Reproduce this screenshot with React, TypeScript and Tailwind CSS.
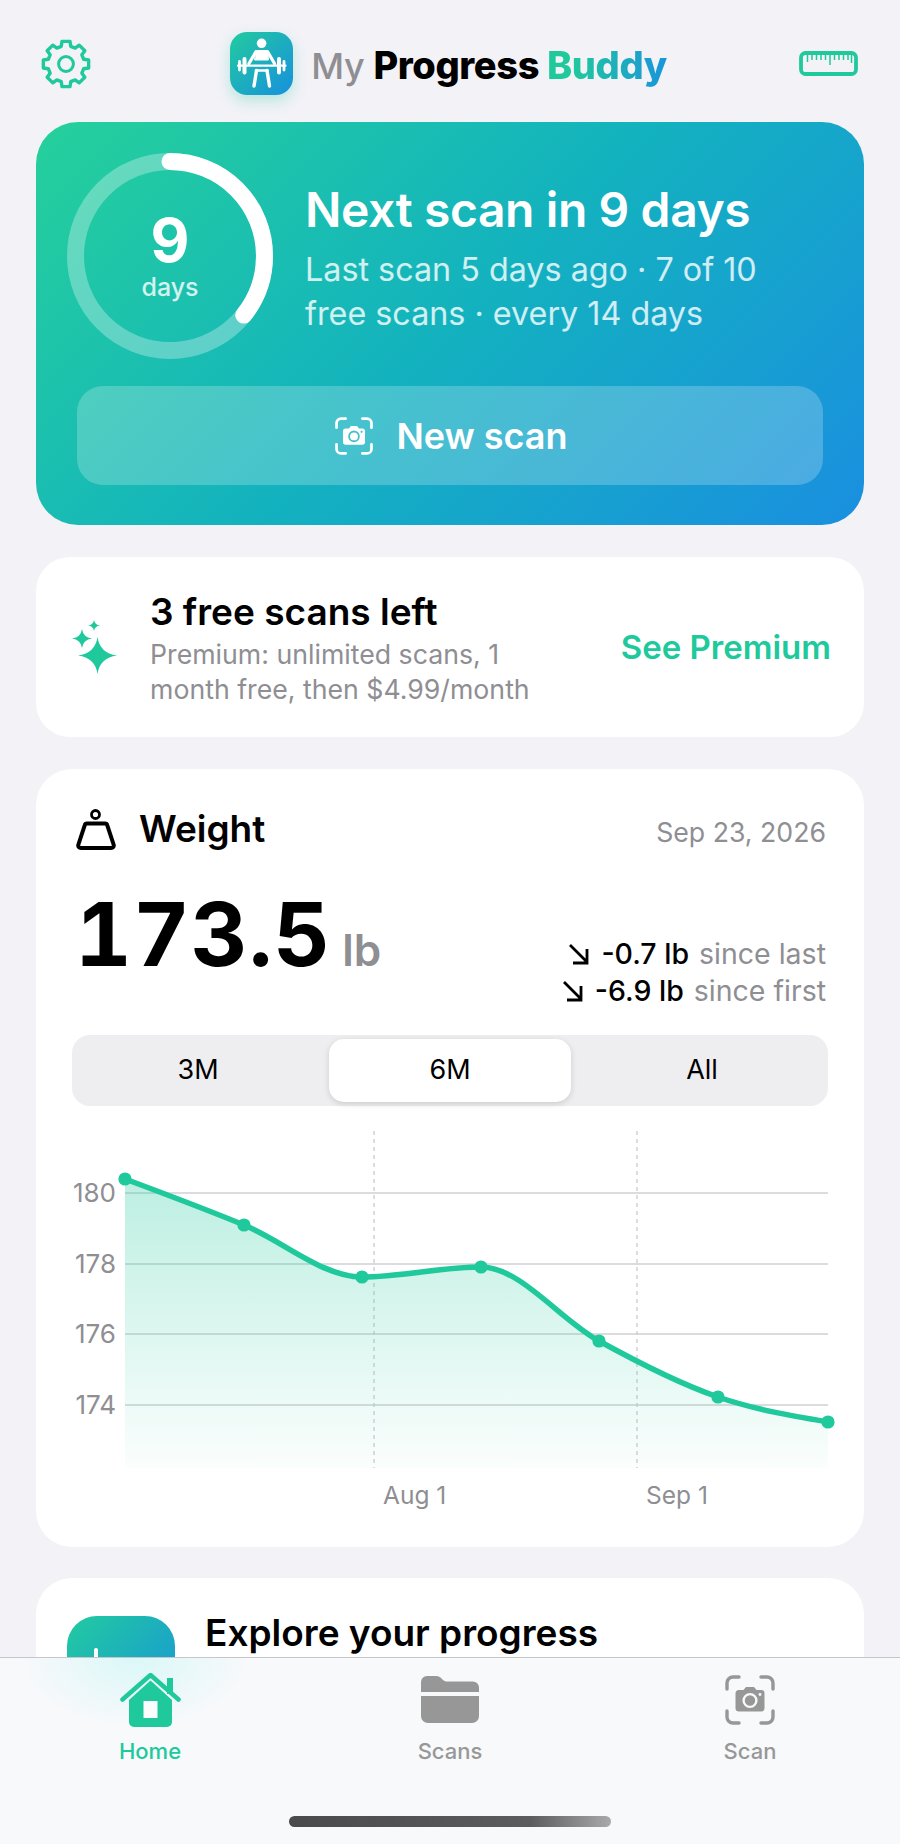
const GREEN = "#20c99c";

function Gear() {
  const cx = 26;
  const cy = 25;
  const pt = (R: number, deg: number) => {
    const a = (deg * Math.PI) / 180;
    return `${(cx + R * Math.cos(a)).toFixed(2)} ${(cy + R * Math.sin(a)).toFixed(2)}`;
  };
  let d = "";
  for (let i = 0; i < 8; i++) {
    const a = i * 45 - 90;
    d += `${i === 0 ? "M" : "L"}${pt(18.3, a - 15)}L${pt(23, a - 10)}L${pt(23, a + 10)}L${pt(18.3, a + 15)}`;
  }
  d += "Z";
  return (
    <svg viewBox="0 0 52 50" width="52" height="50" fill="none" stroke={GREEN} strokeWidth="3.4" strokeLinejoin="round" className="ml-[4px]">
      <path d={d} />
      <circle cx={cx} cy={cy} r="7.4" strokeWidth="3" />
    </svg>
  );
}

function Logo() {
  return (
    <div className="w-[63px] h-[63px] rounded-[17px] bg-[linear-gradient(135deg,#22cb9f,#1790dd)] shadow-[0_6px_14px_rgba(32,201,156,0.28)] shrink-0">
      <svg viewBox="0 0 63 63" width="63" height="63" fill="none" stroke="#fff" strokeLinecap="round" strokeLinejoin="round">
        <circle cx="31.6" cy="11.3" r="4.8" fill="#fff" stroke="none" />
        <path d="M8 33.7H55.5" strokeWidth="2.2" />
        <path d="M9.5 29.5V38M54 29.5V38" strokeWidth="2.8" />
        <path d="M14.5 27V40.5M49 27V40.5" strokeWidth="4" />
        <path d="M19 31.5 26 19.5H37.5L44.5 31.5" strokeWidth="3.2" />
        <path d="M26 19H37.5L38.5 28H25Z" fill="#fff" strokeWidth="1" />
        <path d="M26 38.5H37.5" strokeWidth="2.6" />
        <path d="M26.5 38.5 24 54M37 38.5 39.5 54" strokeWidth="3.4" />
      </svg>
    </div>
  );
}

function RulerIcon() {
  return (
    <svg viewBox="0 0 59 25" width="59" height="25" fill="none" stroke={GREEN} strokeLinecap="butt">
      <rect x="2" y="2" width="55" height="21" rx="4.5" strokeWidth="3.8" />
      <path d="M8.5 3V11M13 3V9M17.5 3V9M22 3V9M26.5 3V9M31 3V14M35.5 3V9M40 3V9M44.5 3V9M49 3V9M52.5 3V12" strokeWidth="1.5" />
    </svg>
  );
}

function ViewfinderCamera({ size, color, sw, lens }: { size: number; color: string; sw: number; lens: string }) {
  return (
    <svg viewBox="0 0 50 50" width={size} height={size} fill="none">
      <path
        d="M2 14V8A6 6 0 0 1 8 2H14M36 2H42A6 6 0 0 1 48 8V14M48 36V42A6 6 0 0 1 42 48H36M14 48H8A6 6 0 0 1 2 42V36"
        stroke={color}
        strokeWidth={sw}
        strokeLinecap="round"
      />
      <path
        d="M14 15H18.5L21 12H29L31.5 15H36A3.5 3.5 0 0 1 39.5 18.5V33A3.5 3.5 0 0 1 36 36.5H14A3.5 3.5 0 0 1 10.5 33V18.5A3.5 3.5 0 0 1 14 15Z"
        fill={color}
      />
      <circle cx="25" cy="25.5" r="6.4" fill="none" stroke={lens} strokeWidth="2.4" />
      <circle cx="35" cy="19.5" r="1.4" fill={lens} />
    </svg>
  );
}

function star(x: number, y: number, w: number, h: number) {
  const k = 0.12;
  const kx = w * k;
  const ky = h * k;
  return `M${x} ${y - h}Q${x + kx} ${y - ky} ${x + w} ${y}Q${x + kx} ${y + ky} ${x} ${y + h}Q${x - kx} ${y + ky} ${x - w} ${y}Q${x - kx} ${y - ky} ${x} ${y - h}Z`;
}

function Sparkles() {
  return (
    <svg viewBox="0 0 45 54" width="45" height="54" fill={GREEN}>
      <path d={star(25.5, 35.5, 19.5, 18.5)} />
      <path d={star(10, 18.5, 10, 9.5)} />
      <path d={star(22, 5.5, 6, 5.5)} />
    </svg>
  );
}

function WeightIcon() {
  return (
    <svg viewBox="0 0 41 41" width="41" height="41" fill="none" stroke="#000" strokeLinecap="round" strokeLinejoin="round" strokeWidth="4">
      <circle cx="19.5" cy="5.5" r="4" strokeWidth="2.8" />
      <path d="M11 14.5H29C30.3 14.5 31 15.2 31.3 16.3L37.6 35.5C38.2 37.5 37 39 35 39H5C3 39 1.8 37.5 2.4 35.5L8.7 16.3C9 15.2 9.7 14.5 11 14.5Z" />
    </svg>
  );
}

function DownRight() {
  return (
    <svg viewBox="0 0 24 24" width="24" height="24" fill="none" stroke="#000" strokeWidth="2.8">
      <path d="M3 3 20 20M20 7V21H6" />
    </svg>
  );
}

function HomeIcon() {
  return (
    <svg viewBox="0 0 61 54" width="61" height="54" fill={GREEN}>
      <path d="M30.5 7.5 52 27V49A5 5 0 0 1 47 54H14A5 5 0 0 1 9 49V27Z" />
      <rect x="23.5" y="28" width="14" height="17" rx="0.5" fill="#fbfdfd" />
      <path d="M2.5 26.5 30.5 2 58.5 26.5" fill="none" stroke={GREEN} strokeWidth="4.5" strokeLinecap="round" strokeLinejoin="round" />
      <rect x="47" y="5" width="6" height="16" />
    </svg>
  );
}

function FolderIcon() {
  return (
    <svg viewBox="0 0 58 47" width="58" height="47" fill="#979797">
      <path d="M0 16V6A6 6 0 0 1 6 0H15C18 0 19.5 1.5 21.5 3.5C23 5 24.5 5.5 26 5.5H52A6 6 0 0 1 58 11.5V16Z" />
      <path d="M0 20H58V40A7 7 0 0 1 51 47H7A7 7 0 0 1 0 40Z" />
    </svg>
  );
}

function Chart() {
  const pts: [number, number][] = [
    [89, 59], [208, 105], [326, 157], [445, 147], [563, 221], [682, 277], [792, 302],
  ];
  const slopes = pts.slice(1).map((p, i) => (p[1] - pts[i][1]) / (p[0] - pts[i][0]));
  const widths = pts.slice(1).map((p, i) => p[0] - pts[i][0]);
  const t = pts.map(() => 0);
  for (let i = 1; i < pts.length - 1; i++) {
    const s0 = slopes[i - 1];
    const s1 = slopes[i];
    const p = (s0 * widths[i] + s1 * widths[i - 1]) / (widths[i - 1] + widths[i]);
    t[i] = (Math.sign(s0) + Math.sign(s1)) * Math.min(Math.abs(s0), Math.abs(s1), 0.5 * Math.abs(p));
  }
  t[0] = (3 * slopes[0] - t[1]) / 2;
  t[pts.length - 1] = (3 * slopes[slopes.length - 1] - t[pts.length - 2]) / 2;
  let d = `M${pts[0][0]} ${pts[0][1]}`;
  for (let i = 0; i < pts.length - 1; i++) {
    const dx = widths[i] / 3;
    d += `C${pts[i][0] + dx} ${pts[i][1] + t[i] * dx} ${pts[i + 1][0] - dx} ${pts[i + 1][1] - t[i + 1] * dx} ${pts[i + 1][0]} ${pts[i + 1][1]}`;
  }
  const area = `${d}L792 348L89 348Z`;
  const grid: [number, string][] = [[73, "180"], [144, "178"], [214, "176"], [285, "174"]];
  return (
    <svg viewBox="0 0 828 400" width="828" height="400" className="block mt-[14px]" style={{ fontFamily: "Inter, sans-serif" }}>
      <defs>
        <linearGradient id="areaFill" x1="0" y1="0" x2="0" y2="1">
          <stop offset="0" stopColor={GREEN} stopOpacity="0.3" />
          <stop offset="1" stopColor={GREEN} stopOpacity="0.02" />
        </linearGradient>
      </defs>
      {grid.map(([y, label]) => (
        <g key={label}>
          <line x1="89" x2="792" y1={y} y2={y} stroke="#d1d1d6" strokeWidth="1.3" />
          <text x="80" y={y + 9} textAnchor="end" fontSize="26" fill="#8e8e93">{label}</text>
        </g>
      ))}
      {[338, 601].map((x) => (
        <line key={x} x1={x} x2={x} y1="11" y2="348" stroke="#c7c7cc" strokeWidth="1.2" strokeDasharray="4 4" />
      ))}
      <path d={area} fill="url(#areaFill)" />
      <path d={d} fill="none" stroke={GREEN} strokeWidth="5.5" strokeLinecap="round" />
      {pts.map(([x, y]) => (
        <circle key={x} cx={x} cy={y} r="6.6" fill={GREEN} />
      ))}
      <text x="347" y="384" fontSize="24.5" fill="#8e8e93">Aug 1</text>
      <text x="610" y="384" fontSize="24.5" fill="#8e8e93">Sep 1</text>
    </svg>
  );
}

export default function App() {
  const r = 94.5;
  const c = 2 * Math.PI * r;
  return (
    <div className="relative h-[1844px] w-[900px] overflow-hidden bg-[#f2f2f7] font-['Inter',sans-serif] text-black">
      <div className="flex flex-col px-9">
        {/* Header */}
        <header className="grid grid-cols-[1fr_auto_1fr] items-center pt-8 pb-[27px]">
          <Gear />
          <div className="flex items-center gap-[18px]">
            <Logo />
            <div className="text-[38px] leading-none tracking-[-0.4px] whitespace-nowrap mt-[2px] mr-[3px]">
              <span className="text-[36px] font-medium text-[#8e8e93]">My </span>
              <span className="font-extrabold">Progress </span>
              <span className="font-extrabold bg-[linear-gradient(90deg,#20c99c_20%,#1a94dc)] bg-clip-text text-transparent">Buddy</span>
            </div>
          </div>
          <div className="flex justify-end pr-[6px]">
            <RulerIcon />
          </div>
        </header>

        {/* Hero */}
        <section className="h-[403px] rounded-[42px] bg-[linear-gradient(135deg,#26d09b,#13b2bf_50%,#1a8fe0)] pt-[31px] px-[31px] text-white">
          <div className="flex items-center gap-[32px]">
            <div className="relative w-[206px] h-[206px] shrink-0">
              <svg viewBox="0 0 206 206" width="206" height="206" fill="none" className="-rotate-90">
                <circle cx="103" cy="103" r={r} stroke="rgba(255,255,255,0.3)" strokeWidth="17" />
                <circle cx="103" cy="103" r={r} stroke="#fff" strokeWidth="17" strokeLinecap="round" strokeDasharray={`${c * 0.357} ${c}`} />
              </svg>
              <div className="absolute inset-0 flex flex-col items-center justify-center">
                <div className="text-[60px] leading-[60px] font-bold">9</div>
                <div className="mt-[2px] text-[25px] leading-[30px] font-medium text-white/80">days</div>
              </div>
            </div>
            <div className="flex flex-col mt-[5px]">
              <h1 className="text-[48px] leading-[56px] font-semibold tracking-[-0.4px] whitespace-nowrap">Next scan in 9 days</h1>
              <p className="mt-[10px] text-[32.3px] leading-[44px] text-white/80 whitespace-nowrap">
                Last scan 5 days ago · 7 of 10
                <br />
                free scans · every 14 days
              </p>
            </div>
          </div>
          <button className="mt-[27px] mx-[10px] w-[746px] h-[99px] rounded-[26px] bg-white/22 flex items-center justify-center gap-[23px] pl-[3px]">
            <ViewfinderCamera size={38} color="#fff" sw={3.6} lens="#45bfc9" />
            <span className="text-[36px] font-semibold">New scan</span>
          </button>
        </section>

        {/* Premium */}
        <section className="mt-[32px] h-[180px] rounded-[34px] bg-white flex items-center pl-[36px] pr-[33px]">
          <Sparkles />
          <div className="ml-[33px] flex-1 flex flex-col mt-[3px]">
            <div className="text-[37px] leading-[42px] font-semibold whitespace-nowrap">3 free scans left</div>
            <div className="mt-[4px] text-[26.7px] leading-[35px] text-[#8e8e93] whitespace-nowrap">
              Premium: unlimited scans, 1
              <br />
              month free, then $4.99/month
            </div>
          </div>
          <div className="text-[33px] font-semibold text-[#20c99c] mt-[2px] whitespace-nowrap">See Premium</div>
        </section>

        {/* Weight */}
        <section className="mt-[32px] h-[778px] rounded-[36px] bg-white px-9 pt-[39px]">
          <div className="flex items-center justify-between">
            <div className="flex items-center gap-[22px] ml-[4px]">
              <WeightIcon />
              <div className="text-[37px] font-semibold leading-[42px]">Weight</div>
            </div>
            <div className="text-[26.7px] leading-[30px] text-[#8e8e93] mr-[2px] mt-[6px]">Sep 23, 2026</div>
          </div>
          <div className="mt-[40px] flex items-start justify-between">
            <div className="flex items-baseline gap-[11px] ml-[3px]">
              <span className="text-[88px] leading-[88px] font-bold tabular-nums tracking-[1px]">173.5</span>
              <span className="text-[44px] font-semibold text-[#8e8e93]">lb</span>
            </div>
            <div className="pt-[45px] flex flex-col items-end text-[28.5px] leading-[37px] mr-[2px]">
              <div className="flex items-center gap-[10px]">
                <DownRight />
                <span className="font-medium">-0.7 lb</span>
                <span className="text-[#8e8e93]">since last</span>
              </div>
              <div className="flex items-center gap-[10px]">
                <DownRight />
                <span className="font-medium">-6.9 lb</span>
                <span className="text-[#8e8e93]">since first</span>
              </div>
            </div>
          </div>
          <div className="mt-[26px] h-[71px] rounded-[18px] bg-[#eeeef0] grid grid-cols-3 items-center text-[27px] text-center">
            <div>3M</div>
            <div className="mx-[5px] h-[63px] rounded-[15px] bg-white shadow-[0_2px_6px_rgba(0,0,0,0.14)] flex items-center justify-center">6M</div>
            <div>All</div>
          </div>
          <div className="-mx-9">
            <Chart />
          </div>
        </section>

        {/* Explore */}
        <section className="mt-[31px] h-[300px] rounded-[36px] bg-white pl-[31px] pt-[38px] flex gap-[30px]">
          <div className="w-[108px] h-[108px] rounded-[30px] bg-[linear-gradient(135deg,#22cb9f,#1790dd)] relative shrink-0">
            <div className="absolute left-[27px] top-[32px] w-[4px] h-[40px] rounded-full bg-white" />
          </div>
          <div className="text-[37px] font-semibold leading-[40px] -mt-[3px] whitespace-nowrap">Explore your progress</div>
        </section>
      </div>

      {/* Tab bar overlay */}
      <nav className="absolute left-0 right-0 top-[1657px] h-[187px] border-t border-[#c6c6c8] bg-[#f8f9fb] bg-[radial-gradient(ellipse_115px_70px_at_135px_0px,rgba(190,245,245,0.5),rgba(248,249,251,0))]">
        <div className="grid grid-cols-3">
          <div className="flex flex-col items-center pt-[15px]">
            <HomeIcon />
            <span className="mt-[9px] text-[22px] leading-[30px] font-medium text-[#20c99c]">Home</span>
          </div>
          <div className="flex flex-col items-center pt-[18px]">
            <FolderIcon />
            <span className="mt-[13px] text-[22px] leading-[30px] font-medium text-[#979797]">Scans</span>
          </div>
          <div className="flex flex-col items-center pt-[17px]">
            <ViewfinderCamera size={50} color="#979797" sw={3.4} lens="#f8f9fb" />
            <span className="mt-[11px] text-[22px] leading-[30px] font-medium text-[#979797]">Scan</span>
          </div>
        </div>
        <div className="absolute left-[289px] top-[158px] w-[322px] h-[11px] rounded-full bg-[linear-gradient(90deg,#4a4a4c,#5c5c5e_75%,#a9a9ab)]" />
      </nav>
    </div>
  );
}
